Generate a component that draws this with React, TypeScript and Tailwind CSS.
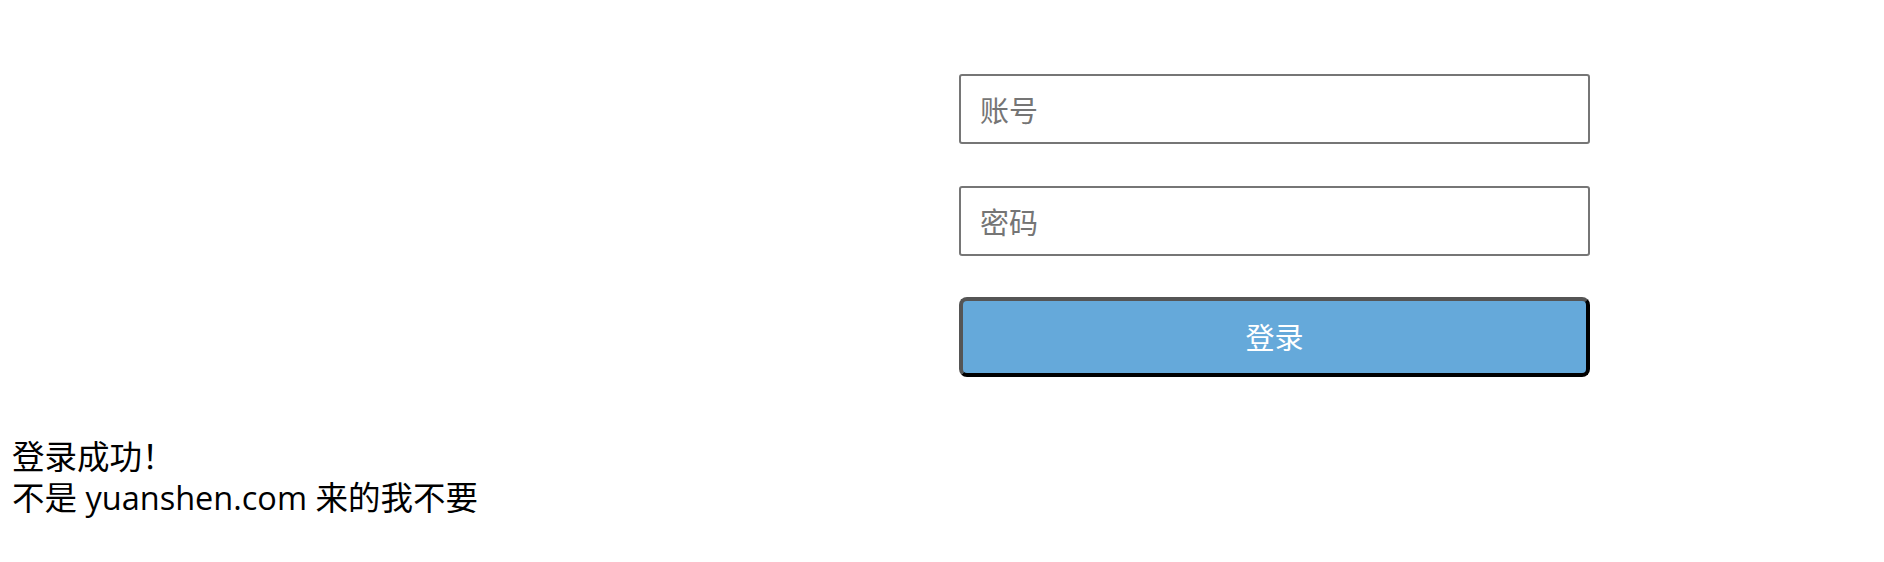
import { useState } from 'react'

export default function App() {
  const [account, setAccount] = useState('')
  const [password, setPassword] = useState('')

  return (
    <div
      className="min-h-[562px] w-full bg-white text-black"
      style={{ fontFamily: "'Noto Sans CJK SC', 'Noto Sans', sans-serif" }}
    >
      {/* Login form */}
      <form
        className="ml-[959px] flex w-[631px] flex-col gap-[42px] pt-[74px]"
        onSubmit={(e) => e.preventDefault()}
      >
        <input
          type="text"
          value={account}
          onChange={(e) => setAccount(e.target.value)}
          placeholder="账号"
          className="h-[70px] w-full rounded-[3px] border-2 border-[#767676] bg-white px-[19px] text-[29px] text-black outline-none placeholder:text-[#757575]"
        />
        <input
          type="password"
          value={password}
          onChange={(e) => setPassword(e.target.value)}
          placeholder="密码"
          className="h-[70px] w-full rounded-[3px] border-2 border-[#767676] bg-white px-[19px] text-[29px] text-black outline-none placeholder:text-[#757575]"
        />
        <button
          type="submit"
          className="-mt-[1px] h-[80px] w-full rounded-[8px] border-[4px] border-t-[#555555] border-l-[#555555] border-b-black border-r-black bg-[#65a9da] text-[29px] text-white"
        >
          登录
        </button>
      </form>

      {/* Result message */}
      <div
        className="mt-[59px] px-[12px] text-[32.5px] leading-[41px]"
        style={{ fontFamily: "'Open Sans', 'Noto Sans CJK SC', sans-serif" }}
      >
        <div>登录成功！</div>
        <div>不是 yuanshen.com 来的我不要</div>
      </div>
    </div>
  )
}
